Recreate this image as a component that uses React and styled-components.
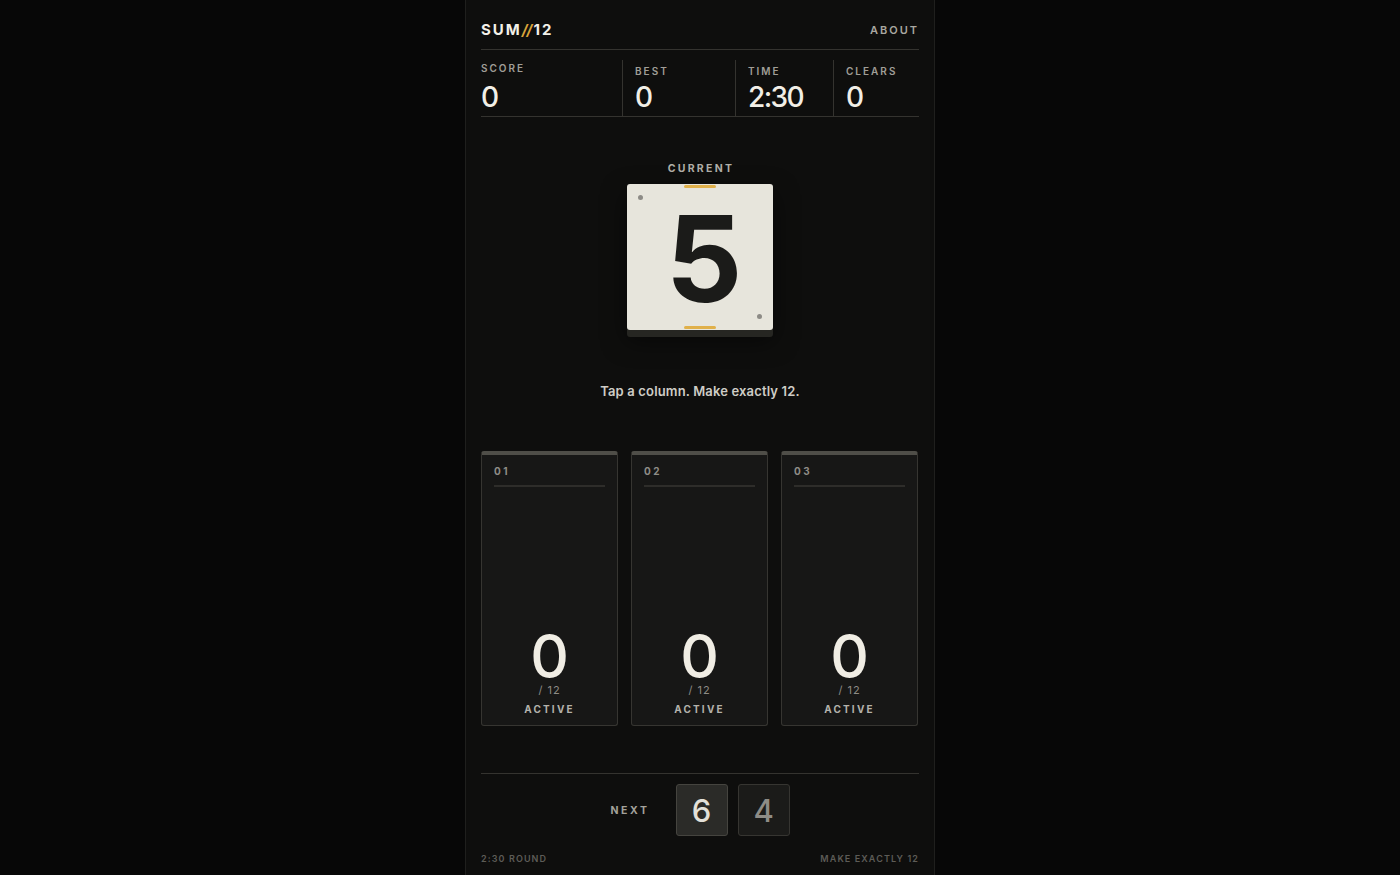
import React from "react";
import styled, { createGlobalStyle } from "styled-components";

const GlobalStyle = createGlobalStyle`
  html, body {
    margin: 0;
    padding: 0;
    background: #070707;
    font-family: Inter, "Noto Sans", sans-serif;
    -webkit-font-smoothing: antialiased;
  }
  * {
    box-sizing: border-box;
  }
`;

const stats = [
  { label: "SCORE", value: "0" },
  { label: "BEST", value: "0" },
  { label: "TIME", value: "2:30" },
  { label: "CLEARS", value: "0" },
];

const columns = ["01", "02", "03"];

function App() {
  return (
    <Page>
      <GlobalStyle />
      <Panel>
        <Header>
          <Logo>
            SUM<Slash>//</Slash>12
          </Logo>
          <About>ABOUT</About>
        </Header>

        <Stats>
          {stats.map((s, i) => (
            <Stat key={s.label} first={i === 0}>
              <StatLabel>{s.label}</StatLabel>
              <StatValue first={i === 0}>{s.value}</StatValue>
            </Stat>
          ))}
        </Stats>

        <Current>
          <SmallCaps>CURRENT</SmallCaps>
          <Card>
            <Notch top />
            <Pin style={{ left: 11, top: 11 }} />
            <CardNumber>5</CardNumber>
            <Pin style={{ right: 11, bottom: 11 }} />
            <Notch />
          </Card>
        </Current>

        <Hint>Tap a column. Make exactly 12.</Hint>

        <Columns>
          {columns.map((c) => (
            <Column key={c}>
              <ColumnHead>
                <ColumnId>{c}</ColumnId>
                <ColumnRule />
              </ColumnHead>
              <ColumnFoot>
                <ColumnSum>0</ColumnSum>
                <ColumnTarget>/ 12</ColumnTarget>
                <ColumnState>ACTIVE</ColumnState>
              </ColumnFoot>
            </Column>
          ))}
        </Columns>

        <NextRow>
          <NextLabel>NEXT</NextLabel>
          <Tile primary>6</Tile>
          <Tile>4</Tile>
        </NextRow>

        <Footer>
          <FootText>2:30 ROUND</FootText>
          <FootText>MAKE EXACTLY 12</FootText>
        </Footer>
      </Panel>
    </Page>
  );
}

export default App;

const Page = styled.div`
  display: flex;
  justify-content: center;
  min-height: 100vh;
`;

const Panel = styled.div`
  width: 470px;
  padding: 0 15px;
  background: #0e0e0d;
  border-left: 1px solid #1f1f1d;
  border-right: 1px solid #1f1f1d;
  min-height: 100vh;
  display: flex;
  flex-direction: column;
`;

const Header = styled.div`
  display: flex;
  align-items: center;
  justify-content: space-between;
  padding: 21px 0 11px;
  border-bottom: 1px solid #34332f;
`;

const Logo = styled.div`
  font-size: 15px;
  line-height: 17px;
  font-weight: 700;
  letter-spacing: 2px;
  color: #f3f0e8;
`;

const Slash = styled.span`
  color: #d9a43a;
  letter-spacing: -1px;
  margin-right: 2px;
  font-style: italic;
`;

const About = styled.div`
  font-size: 11px;
  font-weight: 600;
  letter-spacing: 2px;
  color: #a9a7a0;
`;

const Stats = styled.div`
  display: grid;
  grid-template-columns: 141px 113px 98px 1fr;
  margin-top: 10px;
  height: 57px;
  border-bottom: 1px solid #34332f;
`;

const Stat = styled.div`
  padding: ${(p) => (p.first ? "2px 0 0" : "5px 0 0 12px")};
  border-left: ${(p) => (p.first ? "none" : "1px solid #34332f")};
`;

const StatLabel = styled.div`
  font-size: 10px;
  line-height: 12px;
  font-weight: 600;
  letter-spacing: 2px;
  color: #a09e97;
`;

const StatValue = styled.div`
  margin-top: ${(p) => (p.first ? "8px" : "5px")};
  font-size: 28px;
  line-height: 30px;
  font-weight: 500;
  letter-spacing: -1.6px;
  color: #f1eee6;
`;

const Current = styled.div`
  display: flex;
  flex-direction: column;
  align-items: center;
  margin-top: 46px;
`;

const SmallCaps = styled.div`
  font-size: 10.5px;
  line-height: 12px;
  font-weight: 700;
  letter-spacing: 2.3px;
  color: #b1afa8;
  margin-bottom: 9px;
  padding-left: 2px;
`;

const Card = styled.div`
  position: relative;
  width: 146px;
  height: 146px;
  border-radius: 3px;
  background: #e7e5dc;
  box-shadow: 0 7px 0 #262622, 0 10px 24px rgba(0, 0, 0, 0.55);
  display: flex;
  align-items: center;
  justify-content: center;
`;

const Notch = styled.div`
  position: absolute;
  left: 57px;
  width: 32px;
  height: 3px;
  border-radius: 2px;
  background: #e0b04a;
  ${(p) => (p.top ? "top: 1px;" : "bottom: 1px;")}
`;

const Pin = styled.div`
  position: absolute;
  width: 5px;
  height: 5px;
  border-radius: 50%;
  background: #8d8b86;
`;

const CardNumber = styled.div`
  font-size: 120px;
  line-height: 1;
  font-weight: 700;
  color: #1b1b19;
  margin: 3px 0 0 6px;
  letter-spacing: -2px;
`;

const Hint = styled.div`
  margin-top: 53px;
  text-align: center;
  font-size: 13px;
  line-height: 16px;
  font-weight: 600;
  letter-spacing: 0.15px;
  color: #cfcdc6;
`;

const Columns = styled.div`
  display: grid;
  grid-template-columns: repeat(3, 1fr);
  gap: 13px;
  margin-top: 52px;
  padding-right: 1px;
`;

const Column = styled.div`
  height: 275px;
  display: flex;
  flex-direction: column;
  justify-content: space-between;
  background: #171716;
  border: 1px solid #363531;
  border-top: 4px solid #4f4e48;
  border-radius: 3px;
  padding: 0 12px 10px;
`;

const ColumnHead = styled.div`
  padding-top: 10px;
`;

const ColumnId = styled.div`
  font-size: 10px;
  line-height: 12px;
  font-weight: 700;
  letter-spacing: 2.4px;
  color: #8f8d87;
`;

const ColumnRule = styled.div`
  margin-top: 8px;
  height: 2px;
  background: #2e2d2a;
`;

const ColumnFoot = styled.div`
  display: flex;
  flex-direction: column;
  align-items: center;
`;

const ColumnSum = styled.div`
  font-size: 60px;
  line-height: 56px;
  font-weight: 500;
  color: #f0ede4;
`;

const ColumnTarget = styled.div`
  font-size: 11px;
  line-height: 12px;
  letter-spacing: 1px;
  color: #8d8b85;
`;

const ColumnState = styled.div`
  margin-top: 7px;
  font-size: 10px;
  line-height: 12px;
  font-weight: 700;
  letter-spacing: 2.2px;
  color: #b4b2ab;
`;

const NextRow = styled.div`
  display: flex;
  align-items: center;
  justify-content: center;
  gap: 10px;
  margin-top: 47px;
  padding-top: 10px;
  border-top: 1px solid #34332f;
`;

const NextLabel = styled.div`
  font-size: 10.5px;
  font-weight: 700;
  letter-spacing: 2.6px;
  color: #a3a19a;
  margin-right: 16px;
`;

const Tile = styled.div`
  width: 52px;
  height: 52px;
  border-radius: 3px;
  display: flex;
  align-items: center;
  justify-content: center;
  font-size: 31px;
  font-weight: 500;
  background: ${(p) => (p.primary ? "#2b2b28" : "#1b1b19")};
  border: 1px solid ${(p) => (p.primary ? "#45443f" : "#363531")};
  color: ${(p) => (p.primary ? "#e3e0d8" : "#8e8c86")};
`;

const Footer = styled.div`
  display: flex;
  justify-content: space-between;
  margin-top: 17px;
`;

const FootText = styled.div`
  font-size: 9px;
  line-height: 12px;
  font-weight: 600;
  letter-spacing: 1.1px;
  color: #5d5c57;
`;
